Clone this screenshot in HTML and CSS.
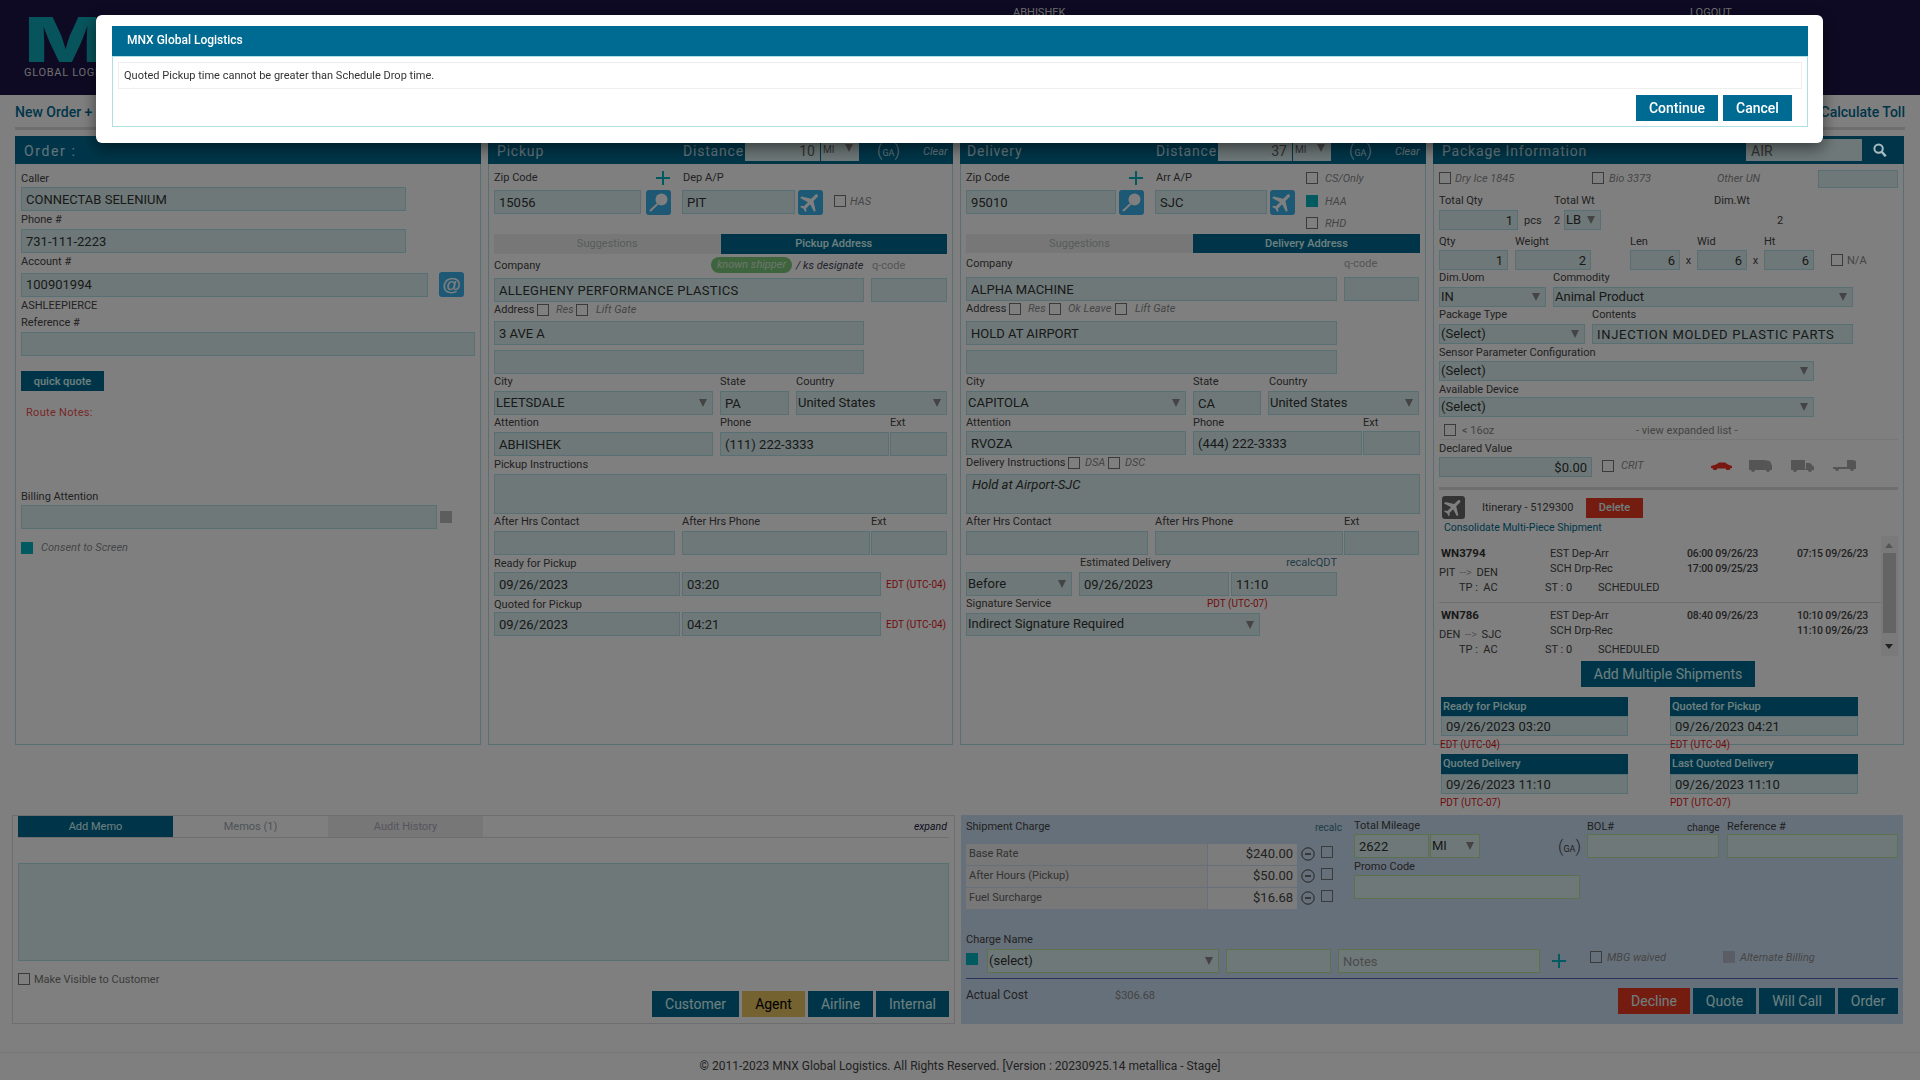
FILE: index.html
```html
<!DOCTYPE html>
<html lang="en">
<head>
  <meta charset="UTF-8">
  <title>MNX Global Logistics</title>
  <link rel="stylesheet" href="styles.css">
</head>
<body>
  <svg class="defs">
    <symbol id="i-plus" viewBox="0 0 14 14"><path d="M7 0v14M0 7h14" fill="none" stroke="currentColor" stroke-width="2"/></symbol>
    <symbol id="i-pin" viewBox="0 0 25 25"><circle cx="15.5" cy="9.5" r="6" fill="currentColor"/><path d="M11.5 14 4 21" stroke="currentColor" stroke-width="2" fill="none"/></symbol>
    <symbol id="i-plane" viewBox="0 0 24 24"><path transform="rotate(45 12 12)" d="M21 16v-2l-8-5V3.5c0-.83-.67-1.5-1.5-1.5S10 2.67 10 3.5V9l-8 5v2l8-2.5V19l-2 1.5V22l3.5-1 3.5 1v-1.5L13 19v-5.5l8 2.5z" fill="currentColor"/></symbol>
    <symbol id="i-minus" viewBox="0 0 14 14"><circle cx="7" cy="7" r="6.2" fill="none" stroke="currentColor"/><path d="M4 7h6" stroke="currentColor" stroke-width="1.4"/></symbol>
  </svg>

  <header class="topbar">
    <div class="logo">
      <div class="logo-mark">MN</div>
      <div class="logo-sub">GLOBAL LOGIS</div>
    </div>
    <span class="user">ABHISHEK</span>
    <span class="logout">LOGOUT</span>
  </header>

  <nav class="subnav">
    <span>New Order +</span>
    <span>Calculate Toll</span>
  </nav>

  <main class="panels">
    <!-- order -->
    <section class="panel p-order">
      <div class="phead"><span class="ptitle order-t">Order :</span></div>
      <div class="pbody">
        <div class="lbl">Caller</div>
        <input class="in w385" value="CONNECTAB SELENIUM">
        <div class="lbl mb3">Phone #</div>
        <input class="in w385" value="731-111-2223">
        <div class="lbl mb4">Account #</div>
        <div class="row">
          <input class="in w407" value="100901994">
          <button class="icon-btn at ml11">@</button>
        </div>
        <div class="acct-name">ASHLEEPIERCE</div>
        <div class="lbl ref-lbl">Reference #</div>
        <input class="in w454">
        <button class="quick">quick quote</button>
        <div class="route-notes">Route Notes:</div>
        <div class="lbl bill-lbl">Billing Attention</div>
        <div class="row">
          <input class="in w416">
          <span class="cb-gray ml3"></span>
        </div>
        <div class="row consent">
          <input type="checkbox" class="cb" checked>
          <span class="opt ml8">Consent to Screen</span>
        </div>
      </div>
    </section>

    <!-- pickup -->
    <section class="panel p-pickup">
      <div class="phead">
        <span class="ptitle w186">Pickup</span>
        <span class="ptitle w62">Distance</span>
        <input class="hin w75" value="10">
        <div class="hunit ml1">MI</div>
        <span class="ga ml18"><i>(</i>GA<i>)</i></span>
        <span class="clear ml25">Clear</span>
      </div>
      <div class="pbody">
        <div class="zip-wrap">
          <div class="w340">
            <div class="row lbl mb5">
              <span class="w162">Zip Code</span>
              <svg class="plus"><use href="#i-plus"/></svg>
              <span class="ml13">Dep A/P</span>
            </div>
            <div class="row top">
              <input class="in w147" value="15056">
              <button class="icon-btn ml5"><svg><use href="#i-pin"/></svg></button>
              <input class="in w113 ml11" value="PIT">
              <button class="icon-btn ml3"><svg><use href="#i-plane"/></svg></button>
            </div>
          </div>
          <div class="cb-col">
            <div class="row h14"></div>
            <div class="row h14"><input type="checkbox" class="cb"><span class="opt ml4">HAS</span></div>
          </div>
        </div>
        <div class="tabs">
          <div class="tab">Suggestions</div>
          <div class="tab on">Pickup Address</div>
        </div>
        <div class="row company">
          <span class="w217">Company</span>
          <span class="pill">known shipper</span>
          <span class="opt dark ml4 w72">/ ks designate</span>
          <span class="muted ml4">q-code</span>
        </div>
        <div class="row">
          <input class="in w370 ls3" value="ALLEGHENY PERFORMANCE PLASTICS">
          <input class="in w76 ml7">
        </div>
        <div class="row lbl mb4">
          <span class="w43">Address</span>
          <input type="checkbox" class="cb">
          <span class="opt ml7 w20">Res</span>
          <input type="checkbox" class="cb">
          <span class="opt ml8">Lift Gate</span>
        </div>
        <input class="in w370" value="3 AVE A">
        <input class="in w370 mt5">
        <div class="row lbl">
          <span class="w226">City</span><span class="w76">State</span><span>Country</span>
        </div>
        <div class="row">
          <select class="in sel w219"><option>LEETSDALE</option></select>
          <input class="in w69 ml7" value="PA">
          <select class="in sel w151 ml7"><option>United States</option></select>
        </div>
        <div class="row lbl">
          <span class="w226">Attention</span><span class="w170">Phone</span><span>Ext</span>
        </div>
        <div class="row">
          <input class="in w219" value="ABHISHEK">
          <input class="in w169 ml7" value="(111) 222-3333">
          <input class="in w57 ml1">
        </div>
        <div class="lbl mb3">Pickup Instructions</div>
        <textarea class="in area w453"></textarea>
        <div class="row lbl">
          <span class="w188">After Hrs Contact</span><span class="w189">After Hrs Phone</span><span>Ext</span>
        </div>
        <div class="row">
          <input class="in w181">
          <input class="in w188 ml7">
          <input class="in w76 ml1">
        </div>
        <div class="lbl">Ready for Pickup</div>
        <div class="row">
          <input class="in w186" value="09/26/2023">
          <input class="in w199 ml2" value="03:20">
          <span class="tz ml5">EDT (UTC-04)</span>
        </div>
        <div class="lbl mb1">Quoted for Pickup</div>
        <div class="row">
          <input class="in w186" value="09/26/2023">
          <input class="in w199 ml2" value="04:21">
          <span class="tz ml5">EDT (UTC-04)</span>
        </div>
      </div>
    </section>

    <!-- delivery -->
    <section class="panel p-delivery">
      <div class="phead">
        <span class="ptitle w189">Delivery</span>
        <span class="ptitle w62">Distance</span>
        <input class="hin w74" value="37">
        <div class="hunit ml1">MI</div>
        <span class="ga ml18"><i>(</i>GA<i>)</i></span>
        <span class="clear ml25">Clear</span>
      </div>
      <div class="pbody">
        <div class="zip-wrap">
          <div class="w340">
            <div class="row lbl mb5">
              <span class="w163">Zip Code</span>
              <svg class="plus"><use href="#i-plus"/></svg>
              <span class="ml13">Arr A/P</span>
            </div>
            <div class="row top">
              <input class="in w150" value="95010">
              <button class="icon-btn ml3"><svg><use href="#i-pin"/></svg></button>
              <input class="in w112 ml11" value="SJC">
              <button class="icon-btn ml3"><svg><use href="#i-plane"/></svg></button>
            </div>
          </div>
          <div class="cb-col">
            <div class="row h14"><input type="checkbox" class="cb"><span class="opt ml7">CS/Only</span></div>
            <div class="row h14"><input type="checkbox" class="cb" checked><span class="opt ml7">HAA</span></div>
            <div class="row h14"><input type="checkbox" class="cb"><span class="opt ml7">RHD</span></div>
          </div>
        </div>
        <div class="tabs h19">
          <div class="tab">Suggestions</div>
          <div class="tab on">Delivery Address</div>
        </div>
        <div class="row company d-company">
          <span class="w378">Company</span>
          <span class="muted">q-code</span>
        </div>
        <div class="row">
          <input class="in w371" value="ALPHA MACHINE">
          <input class="in w75 ml7">
        </div>
        <div class="row lbl mb5">
          <span class="w43">Address</span>
          <input type="checkbox" class="cb">
          <span class="opt ml7 w21">Res</span>
          <input type="checkbox" class="cb">
          <span class="opt ml7 w47">Ok Leave</span>
          <input type="checkbox" class="cb">
          <span class="opt ml8">Lift Gate</span>
        </div>
        <input class="in w371" value="HOLD AT AIRPORT">
        <input class="in w371 mt5">
        <div class="row lbl">
          <span class="w227">City</span><span class="w76">State</span><span>Country</span>
        </div>
        <div class="row">
          <select class="in sel w220"><option>CAPITOLA</option></select>
          <input class="in w68 ml7" value="CA">
          <select class="in sel w151 ml7"><option>United States</option></select>
        </div>
        <div class="row lbl mb1">
          <span class="w227">Attention</span><span class="w170">Phone</span><span>Ext</span>
        </div>
        <div class="row">
          <input class="in w220" value="RVOZA">
          <input class="in w169 ml7" value="(444) 222-3333">
          <input class="in w57 ml1">
        </div>
        <div class="row lbl mb4">
          <span class="w102">Delivery Instructions</span>
          <input type="checkbox" class="cb">
          <span class="opt ml5 w23">DSA</span>
          <input type="checkbox" class="cb">
          <span class="opt ml5">DSC</span>
        </div>
        <textarea class="in area w454 ital">Hold at Airport-SJC</textarea>
        <div class="row lbl">
          <span class="w189">After Hrs Contact</span><span class="w189">After Hrs Phone</span><span>Ext</span>
        </div>
        <div class="row">
          <input class="in w182">
          <input class="in w188 ml7">
          <input class="in w75 ml1">
        </div>
        <div class="row lbl between w371">
          <span class="ml114">Estimated Delivery</span><span class="link-dark">recalcQDT</span>
        </div>
        <div class="row">
          <select class="in sel w106"><option>Before</option></select>
          <input class="in w150 ml7" value="09/26/2023">
          <input class="in w106 ml2" value="11:10">
        </div>
        <div class="row lbl">
          <span class="w241">Signature Service</span><span class="tz">PDT (UTC-07)</span>
        </div>
        <select class="in sel w294 h23"><option>Indirect Signature Required</option></select>
      </div>
    </section>

    <!-- package -->
    <section class="panel p-package">
      <div class="phead">
        <span class="ptitle w304">Package Information</span>
        <input class="hin left w116" value="AIR">
        <svg class="hsearch ml11" viewBox="0 0 14 14"><circle cx="5.6" cy="5.6" r="4.2" fill="none" stroke="currentColor" stroke-width="2"/><path d="m8.7 8.7 4 4.6" stroke="currentColor" stroke-width="2.4"/></svg>
      </div>
      <div class="pbody">
        <div class="row h14 mt1">
          <input type="checkbox" class="cb">
          <span class="opt ml4 w137">Dry Ice 1845</span>
          <input type="checkbox" class="cb">
          <span class="opt ml5 w108">Bio 3373</span>
          <span class="opt w101">Other UN</span>
          <input class="in w80 h18 mt2">
        </div>
        <div class="row lbl mt9">
          <span class="w115">Total Qty</span><span class="w160">Total Wt</span><span>Dim.Wt</span>
        </div>
        <div class="row">
          <input class="in h20 w79 num" value="1">
          <span class="ml6 w30">pcs</span>
          <span class="w10">2</span>
          <select class="in sel h20 w37"><option>LB</option></select>
          <span class="ml176">2</span>
        </div>
        <div class="row lbl mt5 mb1">
          <span class="w76">Qty</span><span class="w115">Weight</span><span class="w67">Len</span><span class="w67">Wid</span><span>Ht</span>
        </div>
        <div class="row">
          <input class="in h20 w69 num" value="1">
          <input class="in h20 w76 ml7 num" value="2">
          <input class="in h20 w50 ml39 num" value="6">
          <span class="times">x</span>
          <input class="in h20 w50 num" value="6">
          <span class="times">x</span>
          <input class="in h20 w50 num" value="6">
          <input type="checkbox" class="cb ml17">
          <span class="ml4 muted-dark">N/A</span>
        </div>
        <div class="row lbl">
          <span class="w114">Dim.Uom</span><span>Commodity</span>
        </div>
        <div class="row">
          <select class="in sel h20 w107"><option>IN</option></select>
          <select class="in sel h20 w300 ml7"><option>Animal Product</option></select>
        </div>
        <div class="row lbl">
          <span class="w153">Package Type</span><span>Contents</span>
        </div>
        <div class="row">
          <select class="in sel h20 w146"><option>(Select)</option></select>
          <input class="in h20 w261 ml7 ls7" value="INJECTION MOLDED PLASTIC PARTS">
        </div>
        <div class="lbl">Sensor Parameter Configuration</div>
        <select class="in sel h20 w375"><option>(Select)</option></select>
        <div class="lbl mb1">Available Device</div>
        <select class="in sel h20 w375"><option>(Select)</option></select>
        <div class="row h14 mt6">
          <input type="checkbox" class="cb ml5">
          <span class="muted-dark ml6 w174">&lt; 16oz</span>
          <span class="muted-dark">- view expanded list -</span>
        </div>
        <div class="hair"></div>
        <div class="lbl">Declared Value</div>
        <div class="row decl">
          <input class="in h20 w153 num" value="$0.00">
          <input type="checkbox" class="cb ml10">
          <span class="opt ml7 w90">CRIT</span>
          <svg class="veh car" viewBox="0 0 21 9"><path d="M0 5 5 3.5 8 1.5h6l3 2 4 1.5v2l-2 .5a2 2 0 0 1-4 0H6a2 2 0 0 1-4 0l-2-.5z" fill="currentColor"/></svg>
          <svg class="veh van ml17" viewBox="0 0 23 13"><path d="M0 1h15l6 1 2 5v4h-2a2 2 0 0 1-4 0H6a2 2 0 0 1-4 0H0z" fill="currentColor"/></svg>
          <svg class="veh van ml19" viewBox="0 0 23 13"><path d="M0 1h14v9h1V4h4l4 4v3h-2a2 2 0 0 1-4 0H6a2 2 0 0 1-4 0H0z" fill="currentColor"/></svg>
          <svg class="veh van ml19" viewBox="0 0 23 13"><path d="M14 1h6l3 1v8h-2a2 2 0 0 1-4 0H6a2 2 0 0 1-4 0H0V8h14z" fill="currentColor"/></svg>
        </div>
        <div class="rule"></div>
        <div class="row itin">
          <div class="plane-dark"><svg><use href="#i-plane"/></svg></div>
          <span class="itin-txt">Itinerary - 5129300</span>
          <button class="btn red del">Delete</button>
        </div>
        <div class="consol">Consolidate Multi-Piece Shipment</div>
        <div class="flights">
          <div class="flight-list">
            <div class="flight">
              <div class="fl-top">
                <div class="fl-id"><b>WN3794</b><span class="route">PIT <em>--&gt;</em> DEN</span></div>
                <div class="fl-est"><div>EST Dep-Arr</div><div>SCH Drp-Rec</div></div>
                <div class="fl-t1"><div>06:00 09/26/23</div><div>17:00 09/25/23</div></div>
                <div class="fl-t2"><div>07:15 09/26/23</div></div>
              </div>
              <div class="fl-bot"><span class="w86">TP : &nbsp;AC</span><span class="w53">ST : 0</span><span>SCHEDULED</span></div>
            </div>
            <div class="flight">
              <div class="fl-top">
                <div class="fl-id"><b>WN786</b><span class="route">DEN <em>--&gt;</em> SJC</span></div>
                <div class="fl-est"><div>EST Dep-Arr</div><div>SCH Drp-Rec</div></div>
                <div class="fl-t1"><div>08:40 09/26/23</div></div>
                <div class="fl-t2"><div>10:10 09/26/23</div><div>11:10 09/26/23</div></div>
              </div>
              <div class="fl-bot"><span class="w86">TP : &nbsp;AC</span><span class="w53">ST : 0</span><span>SCHEDULED</span></div>
            </div>
          </div>
          <div class="scroll">
            <span class="arr up"></span>
            <span class="thumb"></span>
            <span class="arr down"></span>
          </div>
        </div>
        <button class="btn add-multi">Add Multiple Shipments</button>
        <div class="dt-grid">
          <div class="dt">
            <div class="dt-head">Ready for Pickup</div>
            <input class="in dt-in" value="09/26/2023 03:20">
            <div class="tz">EDT (UTC-04)</div>
          </div>
          <div class="dt">
            <div class="dt-head">Quoted for Pickup</div>
            <input class="in dt-in" value="09/26/2023 04:21">
            <div class="tz">EDT (UTC-04)</div>
          </div>
          <div class="dt">
            <div class="dt-head h20">Quoted Delivery</div>
            <input class="in dt-in" value="09/26/2023 11:10">
            <div class="tz">PDT (UTC-07)</div>
          </div>
          <div class="dt">
            <div class="dt-head h20">Last Quoted Delivery</div>
            <input class="in dt-in" value="09/26/2023 11:10">
            <div class="tz">PDT (UTC-07)</div>
          </div>
        </div>
      </div>
    </section>
  </main>

  <section class="bottom">
    <div class="memo">
      <div class="memo-tabs">
        <div class="mtab on">Add Memo</div>
        <div class="mtab">Memos (1)</div>
        <div class="mtab grey">Audit History</div>
        <span class="expand">expand</span>
      </div>
      <textarea class="in memo-area"></textarea>
      <div class="row memo-vis">
        <input type="checkbox" class="cb">
        <span class="ml4">Make Visible to Customer</span>
      </div>
      <div class="btn-row">
        <button class="btn w87">Customer</button>
        <button class="btn gold w63">Agent</button>
        <button class="btn w65">Airline</button>
        <button class="btn w73">Internal</button>
      </div>
    </div>

    <div class="charge">
      <div class="ch-top">
        <div class="w377">
          <div class="row h14">
            <span class="w349">Shipment Charge</span><span class="recalc">recalc</span>
          </div>
          <div class="ch-rows">
            <div class="ch-row"><span class="ch-name">Base Rate</span><span class="ch-amt">$240.00</span><svg class="minus"><use href="#i-minus"/></svg><input type="checkbox" class="cb ml6"></div>
            <div class="ch-row"><span class="ch-name">After Hours (Pickup)</span><span class="ch-amt">$50.00</span><svg class="minus"><use href="#i-minus"/></svg><input type="checkbox" class="cb ml6"></div>
            <div class="ch-row"><span class="ch-name">Fuel Surcharge</span><span class="ch-amt">$16.68</span><svg class="minus"><use href="#i-minus"/></svg><input type="checkbox" class="cb ml6"></div>
          </div>
        </div>
        <div class="w226 ml11">
          <div class="lbl0 mb1">Total Mileage</div>
          <div class="row">
            <input class="in grn w75" value="2622">
            <select class="in grn sel w50 ml1"><option>MI</option></select>
            <span class="ga dark ml78"><i>(</i>GA<i>)</i></span>
          </div>
          <div class="lbl">Promo Code</div>
          <input class="in grn w226">
        </div>
        <div class="w311 ml7">
          <div class="row h14 mb1">
            <span class="w100">BOL#</span><span class="w40 small">change</span><span>Reference #</span>
          </div>
          <div class="row">
            <input class="in grn w132">
            <input class="in grn w171 ml8">
          </div>
        </div>
      </div>
      <div class="lbl0 mb2">Charge Name</div>
      <div class="row ch-add">
        <input type="checkbox" class="cb" checked>
        <select class="in grn sel w232 ml9"><option>(select)</option></select>
        <input class="in grn w105 ml7">
        <input class="in grn w202 ml7 ph" value="Notes">
        <svg class="plus ml12"><use href="#i-plus"/></svg>
        <input type="checkbox" class="cb ml24 hi">
        <span class="opt ml5 w116 hi">MBG waived</span>
        <span class="cb-gray2 hi"></span>
        <span class="opt ml5 hi">Alternate Billing</span>
      </div>
      <div class="ch-line"></div>
      <div class="row top">
        <span class="w149 cost">Actual Cost</span>
        <span class="cost-val">$306.68</span>
        <div class="btn-row ch-btns">
          <button class="btn red w72">Decline</button>
          <button class="btn w63">Quote</button>
          <button class="btn w76">Will Call</button>
          <button class="btn w60">Order</button>
        </div>
      </div>
    </div>
  </section>

  <footer class="foot">© 2011-2023 MNX Global Logistics. All Rights Reserved. [Version : 20230925.14 metallica - Stage]</footer>

  <div class="backdrop"></div>

  <div class="modal">
    <div class="modal-head">MNX Global Logistics</div>
    <div class="modal-body">
      <div class="modal-msg">Quoted Pickup time cannot be greater than Schedule Drop time.</div>
      <div class="modal-btns">
        <button class="mbtn">Continue</button>
        <button class="mbtn">Cancel</button>
      </div>
    </div>
  </div>
</body>
</html>
```

FILE: styles.css
```css
* {
  box-sizing: border-box;
}
html, body {
  margin: 0;
  height: 100%;
  overflow: hidden;
}
body {
  font-family: Roboto, "Liberation Sans", sans-serif;
  font-size: 11px;
  color: #444;
  background: #fff;
}
.defs {
  display: none;
}

/* top bar */
.topbar {
  height: 95px;
  background: #1c1448;
  position: relative;
  overflow: hidden;
}
.logo {
  position: absolute;
  left: 24px;
  top: 9px;
  width: 72px;
  overflow: hidden;
}
.logo-mark {
  font-family: Inter, Roboto, sans-serif;
  font-weight: 800;
  font-size: 62px;
  line-height: 62px;
  letter-spacing: 2px;
  color: #10a8b8;
  white-space: nowrap;
  transform: scaleX(1.42);
  transform-origin: left center;
}
.logo-sub {
  font-size: 11px;
  letter-spacing: .7px;
  color: #ddd;
  white-space: nowrap;
  margin-top: -5px;
}
.user, .logout {
  position: absolute;
  top: 6px;
  font-size: 11px;
  color: #ddd;
}
.user {
  left: 1013px;
}
.logout {
  left: 1690px;
}

.subnav {
  height: 35px;
  margin: 0 15px;
  padding-top: 2px;
  display: flex;
  justify-content: space-between;
  align-items: center;
  border-bottom: 3px solid #ddd;
  font-size: 14px;
  font-weight: 500;
  color: #006b92;
}

/* main panels */
.panels {
  display: flex;
  gap: 7px;
  margin: 6px 0 0 15px;
}
.p-order { width: 466px; }
.p-pickup { width: 465px; }
.p-delivery { width: 466px; }
.p-package { width: 471px; }
.phead {
  height: 28px;
  background: #006b92;
  display: flex;
  align-items: center;
  padding-left: 9px;
  color: #c8e4f0;
}
.p-delivery .phead {
  padding-left: 7px;
}
.ptitle {
  font-size: 14px;
  letter-spacing: .8px;
  white-space: nowrap;
  padding-top: 2px;
}
.order-t {
  letter-spacing: 1.6px;
}
.hin {
  height: 22px;
  border: 0;
  background: #dcf0f0;
  font: 14px Roboto, sans-serif;
  color: #666;
  text-align: right;
  padding: 2px 5px 0;
}
.hin.left {
  text-align: left;
  color: #666;
}
.hunit {
  width: 38px;
  height: 22px;
  padding: 5px 2px 0;
  background: #dcf0f0 url("data:image/svg+xml,%3Csvg xmlns='http://www.w3.org/2000/svg' width='8' height='8'%3E%3Cpath d='M0 0h8L4 8z' fill='%23888'/%3E%3C/svg%3E") no-repeat right 6px top 5px;
  color: #666;
  font-size: 10px;
}
.ga {
  width: 21px;
  font-size: 9px;
  white-space: nowrap;
}
.ga i {
  font-style: normal;
  font-size: 17px;
  font-weight: 300;
}
.ga.dark {
  color: #444;
}
.clear {
  font-style: italic;
  font-size: 11px;
  padding-top: 3px;
}
.hsearch {
  position: relative;
  z-index: 11;
  width: 14px;
  height: 14px;
  color: #a8bcc4;
}
.pbody {
  height: 581px;
  border: 1px solid #b0e0e6;
  border-top: 0;
  padding: 6px 5px 0;
}

.row {
  display: flex;
  align-items: center;
  white-space: nowrap;
}
.row.top {
  align-items: flex-start;
}
.row.between {
  justify-content: space-between;
}
.lbl {
  height: 14px;
  line-height: 16px;
  margin: 1px 0 2px;
  white-space: nowrap;
}
.lbl0 {
  height: 14px;
  line-height: 14px;
}

.in {
  display: block;
  height: 24px;
  margin: 0;
  border: 1px solid #b0e0e6;
  background: #dcf0f0;
  font: 13px Roboto, sans-serif;
  color: #333;
  padding: 0 4px;
  border-radius: 0;
  outline: 0;
}
.in.ls3 {
  letter-spacing: .3px;
}
.in.ls7 {
  letter-spacing: .7px;
}
.in.num {
  text-align: right;
}
.in.grn {
  border-color: #b8e49c;
}
.in.ph {
  color: #999;
}
.in.ital {
  font-style: italic;
}
.sel {
  appearance: none;
  padding: 0 16px 2px 1px;
  background-image: url("data:image/svg+xml,%3Csvg xmlns='http://www.w3.org/2000/svg' width='8' height='8'%3E%3Cpath d='M0 0h8L4 8z' fill='%23888'/%3E%3C/svg%3E");
  background-repeat: no-repeat;
  background-position: right 5px center;
}
.area {
  height: 40px;
  resize: none;
  padding: 2px 5px;
}

.cb {
  appearance: none;
  display: block;
  flex: none;
  width: 12px;
  height: 12px;
  margin: 0;
  border: 1px solid #777;
  background: transparent;
  border-radius: 0;
}
.cb:checked {
  background: #00b4c0;
  border-color: #00b4c0;
}
.cb-gray {
  width: 12px;
  height: 12px;
  background: #bbb;
  flex: none;
}
.cb-gray2 {
  width: 12px;
  height: 12px;
  background: #b4bcc8;
  flex: none;
}
.opt {
  font-style: italic;
  color: #8c8c8c;
}
.opt.dark {
  color: #445;
}
.muted {
  color: #aaa;
}
.muted-dark {
  color: #888;
}
.tz {
  color: #e01818;
  font-size: 10px;
  white-space: nowrap;
}

/* buttons */
.icon-btn {
  width: 25px;
  height: 25px;
  flex: none;
  border: 0;
  padding: 0;
  border-radius: 3px;
  background: #3ab0e8;
  color: #fff;
}
.icon-btn svg {
  display: block;
  width: 25px;
  height: 25px;
}
.icon-btn.at {
  font: bold 19px "Liberation Sans", sans-serif;
}
.btn {
  display: block;
  height: 26px;
  border: 0;
  padding: 0;
  background: #006b92;
  color: #dff;
  font: 14px Roboto, sans-serif;
}
.btn.red {
  background: #e83820;
}
.btn.gold {
  background: #e8c460;
  color: #000;
}
.btn-row {
  display: flex;
  justify-content: flex-end;
  gap: 3px;
}
.quick {
  display: block;
  margin-top: 15px;
  width: 83px;
  height: 20px;
  border: 0;
  padding: 0;
  background: #006b92;
  color: #dff;
  font: 500 11px Roboto, sans-serif;
}
.acct-name {
  height: 14px;
  line-height: 14px;
  margin-top: 2px;
}
.ref-lbl {
  margin-top: 3px;
  line-height: 14px;
}
.route-notes {
  margin: 15px 0 0 5px;
  height: 14px;
  line-height: 14px;
  letter-spacing: .3px;
  color: #f05050;
}
.bill-lbl {
  margin-top: 69px;
}
.consent {
  margin-top: 12px;
}

/* pickup + delivery */
.zip-wrap {
  display: flex;
  height: 64px;
}
.cb-col {
  padding-top: 1px;
  display: flex;
  flex-direction: column;
  gap: 9px;
}
.cb-col .row:nth-child(3) {
  margin-top: -1px;
}
.plus {
  width: 14px;
  height: 14px;
  flex: none;
  color: #00b4c0;
}
.tabs {
  display: flex;
  height: 20px;
}
.tab {
  flex: 1;
  background: #eee;
  color: #b0b8b8;
  text-align: center;
  line-height: 20px;
}
.tab.on {
  background: #006b92;
  color: #dff;
  font-weight: 500;
}
.company {
  height: 16px;
  margin: 3px 0 5px;
}
.d-company {
  height: 14px;
  margin-bottom: 7px;
}
.pill {
  width: 81px;
  height: 16px;
  line-height: 16px;
  border-radius: 8px;
  text-align: center;
  background: #7cc87c;
  color: #d8ecd8;
  font-style: italic;
}
.link-dark {
  color: #3a7a90;
}

/* package */
.times {
  width: 17px;
  text-align: center;
}
.hair {
  height: 1px;
  background: #eee;
  margin-top: 2px;
}
.veh {
  flex: none;
  color: #aaa;
}
.car {
  width: 21px;
  height: 9px;
  color: #f03020;
}
.van {
  width: 23px;
  height: 13px;
}
.decl .cb, .decl .opt, .decl .veh {
  margin-top: -3px;
}
.rule {
  height: 3px;
  background: #ddd;
  margin-top: 10px;
}
.itin {
  margin: 6px 0 0 3px;
}
.plane-dark {
  width: 23px;
  height: 23px;
  border-radius: 3px;
  background: #666;
  color: #fff;
}
.plane-dark svg {
  display: block;
  width: 23px;
  height: 23px;
}
.itin-txt {
  width: 104px;
  margin-left: 17px;
  font-size: 11px;
}
.del {
  width: 57px;
  height: 20px;
  font-size: 11px;
  font-weight: 500;
}
.consol {
  margin: 2px 0 0 5px;
  height: 14px;
  line-height: 14px;
  font-size: 10.5px;
  color: #006b92;
}
.flights {
  margin-top: 1px;
  height: 120px;
  display: flex;
}
.flight-list {
  width: 442px;
}
.flight {
  padding-top: 5px;
}
.flight:first-child {
  padding-top: 10px;
}
.flight:first-child .fl-bot {
  padding-bottom: 8px;
  border-bottom: 1px solid #ddd;
  height: 23px;
}
.fl-top {
  display: flex;
  height: 34px;
}
.fl-id {
  width: 111px;
  display: flex;
  flex-direction: column;
  padding-left: 2px;
}
.fl-id b {
  font-size: 11.5px;
  line-height: 14px;
  color: #333;
}
.route {
  margin: 6px 0 0 -2px;
  line-height: 14px;
}
.route em {
  font-style: normal;
  color: #aaa;
  margin: 0 2px;
}
.fl-est {
  width: 137px;
  line-height: 15px;
}
.fl-t1 {
  width: 110px;
  line-height: 15px;
  font-size: 10.5px;
  font-weight: 500;
  letter-spacing: -.15px;
}
.fl-t2 {
  line-height: 15px;
  font-size: 10.5px;
  font-weight: 500;
  letter-spacing: -.15px;
}
.fl-bot {
  display: flex;
  line-height: 16px;
  padding-left: 20px;
}
.scroll {
  width: 17px;
  background: #f4f4f4;
  position: relative;
}
.thumb {
  position: absolute;
  left: 2px;
  top: 17px;
  width: 13px;
  height: 80px;
  background: #c8c8c8;
}
.arr {
  position: absolute;
  left: 4px;
  width: 0;
  height: 0;
  border-left: 4px solid transparent;
  border-right: 4px solid transparent;
}
.arr.up {
  top: 7px;
  border-bottom: 5px solid #aaa;
}
.arr.down {
  bottom: 7px;
  border-top: 5px solid #444;
}
.add-multi {
  width: 174px;
  margin: 5px 0 0 142px;
  font-weight: 400;
}
.dt-grid {
  display: grid;
  grid-template-columns: 187px 188px;
  column-gap: 42px;
  margin: 10px 0 0 2px;
}
.dt-head {
  height: 19px;
  line-height: 19px;
  padding-left: 2px;
  background: #006b92;
  color: #dff;
  font-size: 11px;
  font-weight: 500;
}
.dt-in {
  width: 100%;
  height: 20px;
  padding-left: 4px;
}
.dt .tz {
  height: 18px;
  line-height: 18px;
  margin-left: -1px;
}
.dt:nth-child(even) .tz {
  margin-left: 0;
}

/* bottom row */
.bottom {
  display: flex;
  gap: 6px;
  margin: 70px 0 0 12px;
}
.memo {
  width: 943px;
  height: 209px;
  border: 1px solid #ddd;
  padding: 0 5px;
}
.memo-tabs {
  display: flex;
  align-items: center;
  height: 22px;
  border-bottom: 1px solid #ddd;
}
.mtab {
  width: 155px;
  height: 21px;
  line-height: 21px;
  text-align: center;
  color: #99a8b0;
}
.mtab.on {
  background: #006b92;
  color: #dff;
}
.mtab.grey {
  background: #eee;
  color: #aab;
}
.expand {
  margin-left: auto;
  margin-right: 2px;
  font-size: 10.5px;
  font-style: italic;
  color: #224;
}
.memo-area {
  width: 931px;
  height: 98px;
  margin-top: 25px;
  resize: none;
}
.memo-vis {
  margin-top: 12px;
  color: #777;
  height: 12px;
}
.memo .btn-row {
  margin-top: 6px;
}
.charge {
  width: 942px;
  height: 209px;
  background: #cce0f4;
  padding: 4px 5px 0;
}
.ch-top {
  display: flex;
  height: 114px;
}
.recalc {
  font-size: 10px;
  color: #3a7a90;
  margin-top: 3px;
}
.small {
  font-size: 10px;
  margin-top: 2px;
}
.ch-rows {
  margin-top: 11px;
  display: flex;
  flex-direction: column;
  gap: 1px;
}
.ch-row {
  display: flex;
  align-items: center;
  height: 21px;
}
.ch-name {
  width: 241px;
  height: 21px;
  line-height: 19px;
  padding-left: 3px;
  background: #f0f0f0;
  color: #666;
}
.ch-amt {
  width: 89px;
  height: 21px;
  line-height: 20px;
  margin-left: 1px;
  padding-right: 4px;
  text-align: right;
  background: #f8f8f8;
  font-size: 13px;
}
.minus {
  width: 14px;
  height: 14px;
  margin: -2px 0 0 4px;
  color: #444;
  flex: none;
}
.ch-row .cb {
  margin-top: -6px;
}
.ch-add > .cb:first-child {
  margin-top: -4px;
}
.hi {
  margin-top: -8px;
}
.ch-line {
  height: 1px;
  margin-top: 5px;
  background: #5a62c0;
}
.ch-btns {
  margin: 9px 0 0 auto;
}
.cost {
  margin-top: 9px;
  font-size: 12px;
  line-height: 14px;
}
.cost-val {
  margin-top: 10px;
  color: #888;
  line-height: 14px;
}

.foot {
  margin-top: 28px;
  border-top: 1px solid #eee;
  padding-top: 6px;
  text-align: center;
  font-size: 12px;
  line-height: 14px;
}

/* modal */
.backdrop {
  position: fixed;
  inset: 0;
  z-index: 10;
  background: rgba(0, 0, 0, .5);
}
.modal {
  position: fixed;
  z-index: 20;
  left: 96px;
  top: 15px;
  width: 1727px;
  height: 128px;
  padding: 11px 15px 16px 16px;
  background: #fff;
  border-radius: 6px;
  box-shadow: 0 5px 15px rgba(0, 0, 0, .5);
}
.modal-head {
  height: 30px;
  line-height: 28px;
  padding-left: 15px;
  background: #006b92;
  color: #fff;
  font-size: 12px;
  font-weight: 500;
}
.modal-body {
  height: 71px;
  border: 1px solid #b0e0e6;
  padding: 5px;
}
.modal-msg {
  height: 27px;
  line-height: 25px;
  padding-left: 5px;
  border: 1px solid #eee;
  font-size: 11px;
  color: #333;
}
.modal-btns {
  display: flex;
  justify-content: flex-end;
  gap: 5px;
  margin: 6px 10px 0 0;
}
.mbtn {
  height: 26px;
  border: 0;
  padding: 0 0 1px;
  background: #006b92;
  color: #fff;
  font: 500 14px Roboto, sans-serif;
}
.mbtn:first-child { width: 82px; }
.mbtn:last-child { width: 69px; }

/* sizes */
.w10 { width: 10px; flex: none; } .w20 { width: 20px; flex: none; } .w21 { width: 21px; flex: none; } .w23 { width: 23px; flex: none; }
.w30 { width: 30px; flex: none; } .w37 { width: 37px; flex: none; } .w40 { width: 40px; flex: none; } .w43 { width: 43px; flex: none; }
.w47 { width: 47px; flex: none; } .w50 { width: 50px; flex: none; } .w53 { width: 53px; flex: none; } .w57 { width: 57px; flex: none; }
.w60 { width: 60px; flex: none; } .w62 { width: 62px; flex: none; } .w63 { width: 63px; flex: none; } .w65 { width: 65px; flex: none; }
.w67 { width: 67px; flex: none; } .w68 { width: 68px; flex: none; } .w69 { width: 69px; flex: none; } .w72 { width: 72px; flex: none; }
.w73 { width: 73px; flex: none; } .w74 { width: 74px; flex: none; } .w75 { width: 75px; flex: none; } .w76 { width: 76px; flex: none; }
.w79 { width: 79px; flex: none; } .w80 { width: 80px; flex: none; } .w86 { width: 86px; flex: none; } .w87 { width: 87px; flex: none; }
.w90 { width: 90px; flex: none; } .w100 { width: 100px; flex: none; } .w101 { width: 101px; flex: none; } .w102 { width: 102px; flex: none; }
.w105 { width: 105px; flex: none; } .w106 { width: 106px; flex: none; } .w107 { width: 107px; flex: none; } .w108 { width: 108px; flex: none; }
.w112 { width: 112px; flex: none; } .w113 { width: 113px; flex: none; } .w114 { width: 114px; flex: none; } .w115 { width: 115px; flex: none; }
.w116 { width: 116px; flex: none; } .w132 { width: 132px; flex: none; } .w137 { width: 137px; flex: none; } .w146 { width: 146px; flex: none; }
.w147 { width: 147px; flex: none; } .w149 { width: 149px; flex: none; } .w150 { width: 150px; flex: none; } .w151 { width: 151px; flex: none; }
.w153 { width: 153px; flex: none; } .w160 { width: 160px; flex: none; } .w162 { width: 162px; flex: none; } .w163 { width: 163px; flex: none; }
.w169 { width: 169px; flex: none; } .w170 { width: 170px; flex: none; } .w171 { width: 171px; flex: none; } .w174 { width: 174px; flex: none; }
.w181 { width: 181px; flex: none; } .w182 { width: 182px; flex: none; } .w186 { width: 186px; flex: none; } .w188 { width: 188px; flex: none; }
.w189 { width: 189px; flex: none; } .w199 { width: 199px; flex: none; } .w202 { width: 202px; flex: none; } .w217 { width: 217px; flex: none; }
.w219 { width: 219px; flex: none; } .w220 { width: 220px; flex: none; } .w226 { width: 226px; flex: none; } .w227 { width: 227px; flex: none; }
.w232 { width: 232px; flex: none; } .w241 { width: 241px; flex: none; } .w261 { width: 261px; flex: none; } .w294 { width: 294px; flex: none; }
.w300 { width: 300px; flex: none; } .w304 { width: 304px; flex: none; } .w311 { width: 311px; flex: none; } .w340 { width: 340px; flex: none; }
.w349 { width: 349px; flex: none; } .w370 { width: 370px; flex: none; } .w371 { width: 371px; flex: none; } .w375 { width: 375px; flex: none; }
.w377 { width: 377px; flex: none; } .w378 { width: 378px; flex: none; } .w385 { width: 385px; flex: none; } .w407 { width: 407px; flex: none; }
.w416 { width: 416px; flex: none; } .w453 { width: 453px; flex: none; } .w454 { width: 454px; flex: none; }
.h14 { height: 14px; }
.h18 { height: 18px; }
.h19 { height: 19px; }
.h20 { height: 20px; }
.h23 { height: 23px; }
.ml1 { margin-left: 1px; } .ml2 { margin-left: 2px; } .ml3 { margin-left: 3px; } .ml4 { margin-left: 4px; }
.ml5 { margin-left: 5px; } .ml6 { margin-left: 6px; } .ml7 { margin-left: 7px; } .ml8 { margin-left: 8px; }
.ml9 { margin-left: 9px; } .ml10 { margin-left: 10px; } .ml11 { margin-left: 11px; } .ml12 { margin-left: 12px; }
.ml13 { margin-left: 13px; } .ml17 { margin-left: 17px; } .ml18 { margin-left: 18px; } .ml19 { margin-left: 19px; }
.ml24 { margin-left: 24px; } .ml25 { margin-left: 25px; } .ml39 { margin-left: 39px; } .ml78 { margin-left: 78px; }
.ml114 { margin-left: 114px; } .ml176 { margin-left: 176px; }
.mt1 { margin-top: 1px; } .mt2 { margin-top: 2px; } .mt5 { margin-top: 5px; } .mt6 { margin-top: 6px; } .mt9 { margin-top: 9px; }
.mb1 { margin-bottom: 1px; } .mb2 { margin-bottom: 2px; } .mb3 { margin-bottom: 3px; } .mb4 { margin-bottom: 4px; } .mb5 { margin-bottom: 5px; }
```
